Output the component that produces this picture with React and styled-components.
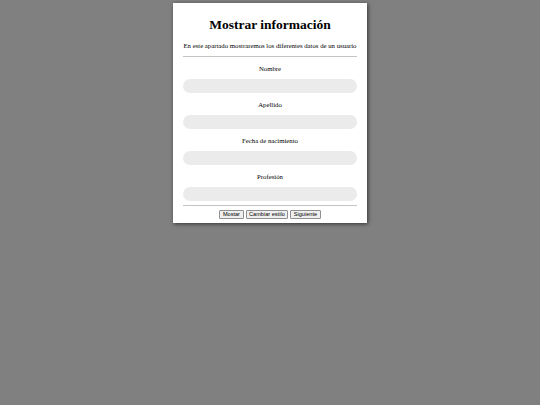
import React from 'react'
import styled, { createGlobalStyle } from 'styled-components'

const GlobalStyle = createGlobalStyle`
  html, body {
    margin: 0;
    padding: 0;
    background: #808080;
    min-height: 100%;
  }
  body {
    font-family: "Liberation Serif", "Times New Roman", serif;
  }
`

const fields = ['Nombre', 'Apellido', 'Fecha de nacimiento', 'Profesión']

function App() {
  return (
    <Page>
      <GlobalStyle />
      <Card>
        <Title>Mostrar información</Title>
        <Intro>En este apartado mostraremos los diferentes datos de un usuario</Intro>
        <Rule />
        {fields.map((name) => (
          <Field key={name}>
            <Label>{name}</Label>
            <Input type="text" />
          </Field>
        ))}
        <Rule $top={3.5} />
        <Actions>
          <Button>Mostar</Button>
          <Button>Cambiar estilo</Button>
          <Button>Siguiente</Button>
        </Actions>
      </Card>
    </Page>
  )
}

export default App

const Page = styled.div`
    min-height: 405px;
    padding-top: 3px;
    box-sizing: border-box;
`

const Card = styled.div`
    width: 194px;
    margin: 0 auto;
    padding: 14px 10px 4px;
    box-sizing: border-box;
    background: #fff;
    box-shadow: 1px 1px 4px rgba(0, 0, 0, 0.6);
    display: flex;
    flex-direction: column;
`

const Title = styled.h1`
    margin: 0;
    font-size: 13.5px;
    line-height: 16px;
    font-weight: bold;
    text-align: center;
    color: #000;
`

const Intro = styled.p`
    margin: 7.5px 0 0;
    font-size: 6.75px;
    line-height: 9px;
    text-align: center;
    color: #000;
    white-space: nowrap;
`

const Rule = styled.div`
    height: 1px;
    margin-top: ${(p) => p.$top ?? 6.5}px;
    background: #c4c4c4;
`

const Field = styled.div`
    display: flex;
    flex-direction: column;
`

const Label = styled.label`
    margin: 7px 0 6px;
    font-size: 6.75px;
    line-height: 9px;
    text-align: center;
    color: #000;
`

const Input = styled.input`
    height: 14px;
    padding: 0 6px;
    box-sizing: border-box;
    border: none;
    border-radius: 7px;
    background: #ebebeb;
    outline: none;
`

const Actions = styled.div`
    display: flex;
    justify-content: center;
    gap: 2px;
    margin-top: 4px;
`

const Button = styled.button`
    height: 9px;
    padding: 0 2.5px;
    font-family: "Liberation Sans", Arial, sans-serif;
    font-size: 5.6px;
    line-height: 7px;
    color: #000;
    background: #efefef;
    border: 1px solid #8f8f8f;
    border-radius: 1px;
`
